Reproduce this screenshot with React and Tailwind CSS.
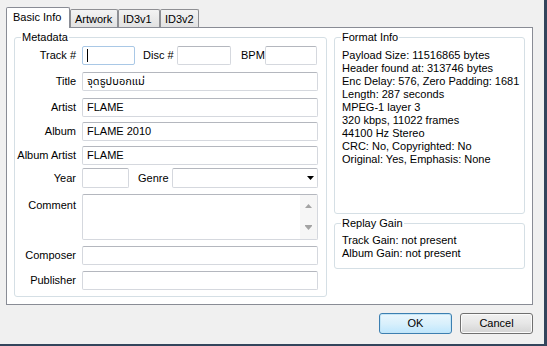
import React from 'react';

const box = 'h-[19px] shrink-0 border border-[#d5d8de] border-t-[#b4b7be] rounded-[2px] bg-white flex items-center pl-[4px] overflow-hidden whitespace-nowrap';

// una riga del form: etichetta a destra + campo
function Row({ label, mt, children, h = 'h-[19px]', top = false }) {
  return (
    <div className={`flex ${top ? 'items-start' : 'items-center'} ${mt} ${h}`}>
      <div className={`w-[61px] shrink-0 text-right whitespace-nowrap ${top ? 'pt-[3px]' : ''}`}>{label}</div>
      <div className="ml-[6px] flex-1 min-w-0 flex items-center h-full whitespace-nowrap">{children}</div>
    </div>
  );
}

function Group({ title, className, inner = '', children }) {
  return (
    <fieldset className={`min-w-0 border border-[#d5dfe5] rounded-[3px] ${className}`}>
      <legend className="ml-[6px] px-[1px] leading-[13px]">{title}</legend>
      <div className={inner}>{children}</div>
    </fieldset>
  );
}

function Tab({ label, active, w }) {
  if (active) {
    return (
      <div className={`${w} h-[21px] bg-white border border-b-0 border-[#898c95] rounded-t-[2px] relative z-10 pl-[6px] pt-[3px] leading-[13px]`}>
        {label}
      </div>
    );
  }
  return (
    <div className={`${w} h-[18px] mb-[1px] bg-gradient-to-b from-[#f3f3f3] to-[#e2e2e2] border border-b-0 border-[#8e8f93] rounded-t-[2px] pl-[4px] pt-[3px] leading-[13px]`}>
      {label}
    </div>
  );
}

export default function App() {
  const info = [
    'Payload Size: 11516865 bytes',
    'Header found at: 313746 bytes',
    'Enc Delay: 576, Zero Padding: 1681',
    'Length: 287 seconds',
    'MPEG-1 layer 3',
    '320 kbps, 11022 frames',
    '44100 Hz Stereo',
    'CRC: No, Copyrighted: No',
    'Original: Yes, Emphasis: None',
  ];

  return (
    <div className="w-[547px] h-[346px] bg-[#f0f0f0] border-r-[3px] border-b-[2px] border-[#33455c] pt-[7px] pl-[6px] font-['Liberation_Sans','Noto_Sans_Thai','Tlwg_Typo',sans-serif] text-[11px] text-black overflow-hidden">
      {/* Tabs */}
      <div className="flex items-end h-[21px] -mb-[1px] relative">
        <Tab label="Basic Info" active w="w-[64px]" />
        <Tab label="Artwork" w="w-[48px]" />
        <Tab label="ID3v1" w="w-[42px]" />
        <Tab label="ID3v2" w="w-[39px]" />
      </div>

      {/* Pannello */}
      <div className="w-[527px] h-[278px] bg-white border border-[#898c95] flex pl-[7px] pt-[3px]">
        <Group title="Metadata" className="w-[313px] shrink-0 h-[266px] pr-[8px]" inner="flex flex-col pt-[2px]">
          <Row label="Track #" mt="mt-0">
            <div className="w-[53px] h-[19px] shrink-0 border border-[#a9c8e6] rounded-[2px] bg-white flex items-center pl-[4px]">
              <div className="w-[1px] h-[13px] bg-black" />
            </div>
            <span className="ml-[8px] w-[34px] shrink-0">Disc #</span>
            <div className={`${box} w-[54px]`} />
            <span className="ml-[10px] w-[24px] shrink-0">BPM</span>
            <div className={`${box} w-[52px]`} />
          </Row>
          <Row label="Title" mt="mt-[7px]">
            <div className={`${box} w-full shrink`}>จุดธูปบอกแม่</div>
          </Row>
          <Row label="Artist" mt="mt-[7px]">
            <div className={`${box} w-full shrink`}>FLAME</div>
          </Row>
          <Row label="Album" mt="mt-[5px]">
            <div className={`${box} w-full shrink`}>FLAME 2010</div>
          </Row>
          <Row label="Album Artist" mt="mt-[5px]">
            <div className={`${box} w-full shrink`}>FLAME</div>
          </Row>
          <Row label="Year" mt="mt-[3px]" h="h-[20px]">
            <div className={`${box} w-[47px] h-[20px]`} />
            <span className="ml-[9px] w-[34px] shrink-0">Genre</span>
            <div className="flex-1 h-[20px] border border-[#d5d8de] border-t-[#b4b7be] rounded-[2px] bg-white flex items-center justify-end pr-[3px]">
              <svg width="7" height="4" viewBox="0 0 7 4"><path d="M0 0h7L3.5 4z" fill="#000" /></svg>
            </div>
          </Row>
          <Row label="Comment" mt="mt-[6px]" h="h-[46px]" top>
            <div className="w-full h-[46px] border border-[#d5d8de] border-t-[#b4b7be] rounded-[2px] bg-white flex justify-end">
              <div className="w-[17px] h-full bg-[#f6f6f6] flex flex-col items-center justify-between py-[9px]">
                <svg width="7" height="4" viewBox="0 0 7 4"><path d="M3.5 0L7 4H0z" fill="#a3a3a3" /></svg>
                <svg width="7" height="5" viewBox="0 0 7 5"><path d="M0 0h7v1H0zM0 1h7L3.5 5z" fill="#a3a3a3" /></svg>
              </div>
            </div>
          </Row>
          <Row label="Composer" mt="mt-[6px]">
            <div className={`${box} w-full shrink`} />
          </Row>
          <Row label="Publisher" mt="mt-[6px]">
            <div className={`${box} w-full shrink`} />
          </Row>
        </Group>

        <div className="ml-[7px] flex flex-col">
          <Group title="Format Info" className="w-[191px] h-[183px]" inner="pl-[7px] pt-[5px]">
            {info.map((l) => (
              <div key={l} className="leading-[13px] whitespace-nowrap">{l}</div>
            ))}
          </Group>
          <Group title="Replay Gain" className="w-[191px] h-[52px] mt-[3px]" inner="pl-[7px] pt-[4px]">
            <div className="leading-[13px]">Track Gain: not present</div>
            <div className="leading-[13px]">Album Gain: not present</div>
          </Group>
        </div>
      </div>

      {/* Pulsanti */}
      <div className="w-[527px] flex justify-end gap-[8px] mt-[8px]">
        <button className="w-[73px] h-[21px] rounded-[3px] border border-[#3c7fb1] bg-gradient-to-b from-[#eaf6fd] via-[#d9f0fc] to-[#bee6fd] shadow-[inset_0_0_0_1px_#c4e5f6] text-[11px]">
          OK
        </button>
        <button className="w-[73px] h-[21px] rounded-[3px] border border-[#707070] bg-gradient-to-b from-[#f2f2f2] via-[#e6e6e6] to-[#d4d4d4] shadow-[inset_0_0_0_1px_#fbfbfb] text-[11px]">
          Cancel
        </button>
      </div>
    </div>
  );
}
